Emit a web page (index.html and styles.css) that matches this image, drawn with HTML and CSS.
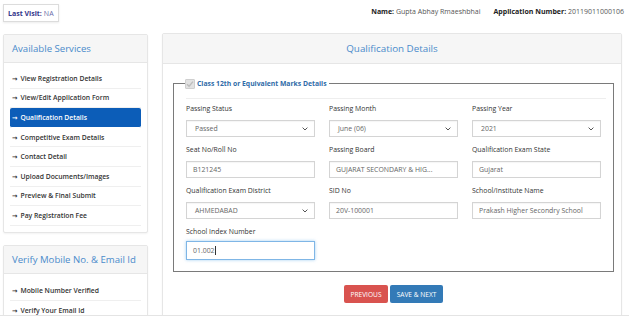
FILE: index.html
```html
<!DOCTYPE html>
<html>
<head>
<meta charset="utf-8">
<link rel="stylesheet" href="styles.css">
</head>
<body>
<div class="page">
  <div class="topbar">
    <div class="last-visit"><b>Last Visit:</b> NA</div>
    <div class="user-info">
      <span><b>Name:</b> Gupta Abhay Rmaeshbhai</span>
      <span><b>Application Number:</b> 20119011000106</span>
    </div>
  </div>
  <div class="content">
    <aside class="sidebar">
      <div class="panel side-panel">
        <div class="panel-heading">Available Services</div>
        <ul class="menu">
          <li>View Registration Details</li>
          <li>View/Edit Application Form</li>
          <li class="active">Qualification Details</li>
          <li>Competitive Exam Details</li>
          <li>Contact Detail</li>
          <li>Upload Documents/Images</li>
          <li>Preview &amp; Final Submit</li>
          <li>Pay Registration Fee</li>
        </ul>
      </div>
      <div class="panel side-panel">
        <div class="panel-heading">Verify Mobile No. &amp; Email Id</div>
        <ul class="menu menu-verify">
          <li>Mobile Number Verified</li>
          <li>Verify Your Email Id</li>
        </ul>
      </div>
    </aside>
    <main class="panel main-panel">
      <div class="panel-heading centered">Qualification Details</div>
      <div class="panel-body">
        <fieldset class="marks">
          <legend><span class="check"><svg width="8" height="8" viewBox="0 0 8 8"><path d="M1 4.2 L3.1 6.2 L7 1.6" fill="none" stroke="#bdbdbd" stroke-width="1.4"/></svg></span>Class 12th or Equivalent Marks Details</legend>
          <div class="rule"></div>
          <div class="grid">
            <div class="field">
              <label>Passing Status</label>
              <div class="control select">Passed<svg class="chev" width="6" height="4" viewBox="0 0 6 4"><path d="M0.6 0.6 L3 3 L5.4 0.6" fill="none" stroke="#555" stroke-width="1"/></svg></div>
            </div>
            <div class="field">
              <label>Passing Month</label>
              <div class="control select">June (06)<svg class="chev" width="6" height="4" viewBox="0 0 6 4"><path d="M0.6 0.6 L3 3 L5.4 0.6" fill="none" stroke="#555" stroke-width="1"/></svg></div>
            </div>
            <div class="field">
              <label>Passing Year</label>
              <div class="control select">2021<svg class="chev" width="6" height="4" viewBox="0 0 6 4"><path d="M0.6 0.6 L3 3 L5.4 0.6" fill="none" stroke="#555" stroke-width="1"/></svg></div>
            </div>
            <div class="field">
              <label>Seat No/Roll No</label>
              <div class="control">B121245</div>
            </div>
            <div class="field">
              <label>Passing Board</label>
              <div class="control">GUJARAT SECONDARY &amp; HIG...</div>
            </div>
            <div class="field">
              <label>Qualification Exam State</label>
              <div class="control">Gujarat</div>
            </div>
            <div class="field">
              <label>Qualification Exam District</label>
              <div class="control select">AHMEDABAD<svg class="chev" width="6" height="4" viewBox="0 0 6 4"><path d="M0.6 0.6 L3 3 L5.4 0.6" fill="none" stroke="#555" stroke-width="1"/></svg></div>
            </div>
            <div class="field">
              <label>SID No</label>
              <div class="control">20V-100001</div>
            </div>
            <div class="field">
              <label>School/Institute Name</label>
              <div class="control">Prakash Higher Secondry School</div>
            </div>
            <div class="field">
              <label class="tight">School Index Number</label>
              <div class="control focus">01.002<span class="caret"></span></div>
            </div>
          </div>
        </fieldset>
        <div class="actions">
          <button class="btn btn-red">PREVIOUS</button>
          <button class="btn btn-blue">SAVE &amp; NEXT</button>
        </div>
      </div>
    </main>
  </div>
</div>
</body>
</html>
```
FILE: styles.css
```css
* { box-sizing: border-box; }
html, body { margin: 0; padding: 0; background: #fff; }
body {
  font-family: "Open Sans", "Noto Sans", "DejaVu Sans", sans-serif;
  color: #333;
  font-size: 7px;
}
.page {
  height: 316px;
  overflow: hidden;
  border-bottom: 1px solid #e4e4e4;
}
.topbar {
  display: flex;
  justify-content: space-between;
  align-items: center;
  padding: 4px 5px 0 3px;
  height: 22px;
}
.last-visit {
  height: 18px;
  padding: 0 4px;
  display: flex;
  align-items: center;
  border: 1px solid #dcdcdc;
  box-shadow: 0 1px 2px rgba(0,0,0,0.08);
  color: #6a6aa8;
  font-size: 7px;
}
.last-visit b { color: #34348a; font-weight: 700; margin-right: 2px; }
.user-info {
  display: flex;
  gap: 13px;
  color: #555;
  font-size: 7px;
  margin-top: -4px;
}
.user-info b { color: #222; font-weight: 700; }
.content {
  display: flex;
  gap: 14px;
  padding: 11px 7px 0 3px;
  align-items: flex-start;
}
.panel {
  background: #fff;
  border: 1px solid #e6e6e6;
  border-radius: 2px;
  box-shadow: 0 1px 2px rgba(0,0,0,0.05);
}
.sidebar {
  width: 145px;
  display: flex;
  flex-direction: column;
  gap: 12px;
  margin-top: 1px;
}
.panel-heading {
  background: #f6f6f6;
  border-bottom: 1px solid #e6e6e6;
  color: #4a8bcb;
  font-size: 9.6px;
  height: 28px;
  display: flex;
  align-items: center;
  padding: 0 8px;
}
.panel-heading.centered { justify-content: center; height: 30px; font-size: 9.8px; }
.menu {
  list-style: none;
  margin: 0;
  padding: 6px 6px 6px 6px;
}
.menu-verify { padding-top: 7.5px; }
.menu li {
  height: 19.6px;
  display: flex;
  align-items: center;
  padding-left: 2px;
  border-bottom: 1px solid #efefef;
  font-weight: 600;
  font-size: 6.8px;
  color: #333;
}
.menu li::before {
  content: "→";
  font-size: 6.5px;
  margin-right: 3px;
  font-weight: 700;
}
.menu li.active {
  background: #0c5db8;
  color: #fff;
  border-radius: 2px;
  border-bottom-color: #fff;
}
.main-panel {
  width: 460px;
  height: 300px;
}
.panel-body {
  padding: 14px 9px 0 10px;
}
.marks {
  margin: 0;
  border: 1px solid #7a7a7a;
  padding: 0 12px 3px 12px;
}
.marks legend {
  display: flex;
  align-items: center;
  padding: 0 2px 0 0;
  margin-left: -1px;
  color: #2f6ba8;
  font-weight: 700;
  font-size: 6.8px;
  height: 11px;
}
.check {
  width: 10px;
  height: 10px;
  background: #e2e2e2;
  border: 1px solid #cfcfcf;
  border-radius: 1px;
  display: inline-flex;
  align-items: center;
  justify-content: center;
  margin-right: 2px;
}
.rule {
  height: 1px;
  background: #eeeeee;
  margin: 9px -5px 5px 0;
}
.grid {
  display: grid;
  grid-template-columns: repeat(3, 129px);
  column-gap: 14px;
}
.field {
  display: flex;
  flex-direction: column;
  margin-bottom: 8px;
}
.field label {
  line-height: 10px;
  height: 10px;
  margin-bottom: 6px;
  color: #333;
  font-size: 6.9px;
}
.field label.tight { margin-bottom: 4px; }
.control {
  height: 17px;
  border: 1px solid #d4d4d4;
  display: flex;
  align-items: center;
  padding: 0 6px;
  color: #666;
  font-size: 6.9px;
  white-space: nowrap;
  overflow: hidden;
  box-shadow: inset 0 1px 1px rgba(0,0,0,0.04);
}
.control.select { padding-left: 8px; justify-content: space-between; padding-right: 6px; }
.control.focus {
  border-color: #7fb6e6;
  box-shadow: 0 0 3px rgba(102,175,233,0.6);
  height: 19px;
}
.caret {
  width: 0.6px;
  height: 9px;
  background: #333;
  margin-left: 0.5px;
}
.actions {
  display: flex;
  justify-content: center;
  gap: 2px;
  margin-top: 13px;
  padding-left: 2px;
}
.btn {
  height: 18px;
  border: none;
  border-radius: 2px;
  color: #fff;
  font-family: "Open Sans", "Noto Sans", sans-serif;
  font-size: 6.6px;
  padding: 0 6px;
}
.btn-red { background: #d9534f; width: 44px; }
.btn-blue { background: #337ab7; width: 53px; }
```
